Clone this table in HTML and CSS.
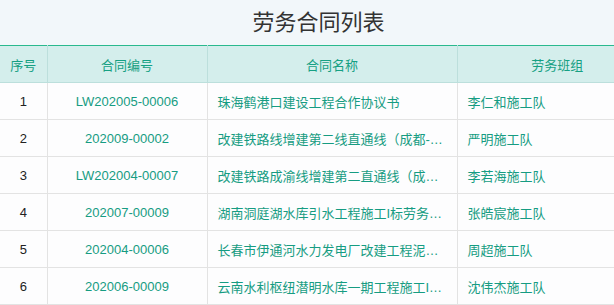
FILE: index.html
```html
<!DOCTYPE html>
<html lang="zh-CN">
<head>
<meta charset="utf-8">
<title>劳务合同列表</title>
<link rel="stylesheet" href="styles.css">
</head>
<body>
<div class="page">
  <h1 class="title">劳务合同列表</h1>
  <table class="grid">
    <colgroup>
      <col class="c-no"><col class="c-code"><col class="c-name"><col class="c-team">
    </colgroup>
    <thead>
      <tr><th>序号</th><th>合同编号</th><th>合同名称</th><th class="team-h">劳务班组</th></tr>
    </thead>
    <tbody>
      <tr><td class="no">1</td><td class="code">LW202005-00006</td><td class="name">珠海鹤港口建设工程合作协议书</td><td class="team">李仁和施工队</td></tr>
      <tr><td class="no">2</td><td class="code">202009-00002</td><td class="name">改建铁路线增建第二线直通线（成都-…</td><td class="team">严明施工队</td></tr>
      <tr><td class="no">3</td><td class="code">LW202004-00007</td><td class="name">改建铁路成渝线增建第二直通线（成…</td><td class="team">李若海施工队</td></tr>
      <tr><td class="no">4</td><td class="code">202007-00009</td><td class="name">湖南洞庭湖水库引水工程施工I标劳务…</td><td class="team">张皓宸施工队</td></tr>
      <tr><td class="no">5</td><td class="code">202004-00006</td><td class="name">长春市伊通河水力发电厂改建工程泥…</td><td class="team">周超施工队</td></tr>
      <tr><td class="no">6</td><td class="code">202006-00009</td><td class="name">云南水利枢纽潜明水库一期工程施工I…</td><td class="team">沈伟杰施工队</td></tr>
    </tbody>
  </table>
</div>
</body>
</html>
```

FILE: styles.css
```css
html, body {
  margin: 0;
  padding: 0;
  background: #ffffff;
  overflow: hidden;
}
body {
  font-family: "Liberation Sans", "Noto Sans CJK SC", sans-serif;
}
.page {
  width: 614px;
}
.title {
  margin: 0;
  height: 45px;
  line-height: 45px;
  padding-left: 23px;
  text-align: center;
  font-size: 22px;
  font-weight: normal;
  color: #333333;
  background: #f2f7fa;
}
.grid {
  width: 614px;
  table-layout: fixed;
  border-collapse: collapse;
  font-size: 13px;
}
.c-no { width: 47px; }
.c-code { width: 160px; }
.c-name { width: 250px; }
.c-team { width: 157px; }
.grid thead tr {
  border-top: 1px solid #2ab98e;
  background: #d4eeec;
}
.grid th {
  height: 36px;
  padding: 0;
  font-weight: normal;
  color: #16a083;
  text-align: center;
  border-right: 1px solid #bcdfdc;
  border-bottom: 1px solid #bcdfdc;
}
.grid th.team-h {
  padding-left: 43px;
  border-right: none;
}
.grid td {
  height: 36px;
  padding: 0 10px;
  color: #169c82;
  border-right: 1px solid #e3e3e3;
  border-bottom: 1px solid #e3e3e3;
  white-space: nowrap;
  overflow: hidden;
  text-overflow: ellipsis;
  background: #fdfdfe;
}
.grid td.team {
  border-right: none;
}
.grid td.no {
  padding: 0;
  text-align: center;
  color: #222222;
}
.grid td.code {
  text-align: center;
}
```
